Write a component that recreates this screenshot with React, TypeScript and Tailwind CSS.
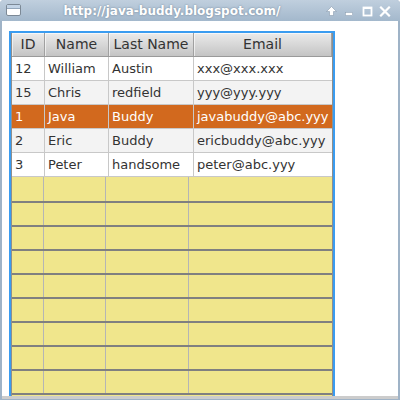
import React from "react";

const rows: string[][] = [
  ["12", "William", "Austin", "xxx@xxx.xxx"],
  ["15", "Chris", "redfield", "yyy@yyy.yyy"],
  ["1", "Java", "Buddy", "javabuddy@abc.yyy"],
  ["2", "Eric", "Buddy", "ericbuddy@abc.yyy"],
  ["3", "Peter", "handsome", "peter@abc.yyy"],
];

const colW = ["w-[33px]", "w-[64px]", "w-[85px]", "flex-1"];
const yelW = ["w-[32px]", "w-[62px]", "w-[83px]", "flex-1"];

function YellowRow({ top, h }: { top: boolean; h: string }) {
  return (
    <div className={`flex ${h} ${top ? "border-t-2 border-[#808080]" : ""}`}>
      {yelW.map((w, i) => (
        <div key={i} className={`${w} h-full ${i < 3 ? "border-r border-[#b5b5b5]" : ""}`} />
      ))}
    </div>
  );
}

export default function App() {
  const headers = ["ID", "Name", "Last Name", "Email"];
  return (
    <div className="w-[400px] h-[400px] flex flex-col bg-[#9fb3c7] rounded-t-[4px] pb-[1px] overflow-hidden font-['DejaVu_Sans',sans-serif]">
      {/* title bar */}
      <div className="h-[21px] flex items-center bg-gradient-to-b from-[#c0cfde] to-[#a3b8cc] shrink-0">
        <svg width="16" height="13" viewBox="0 0 16 13" className="ml-[6px] shrink-0">
          <rect x="0.5" y="0.5" width="14" height="11" rx="1.5" fill="#ffffff" stroke="#7c8996" />
          <rect x="1" y="1" width="13" height="3" fill="#c3d4e6" />
          <line x1="1" y1="4.5" x2="14" y2="4.5" stroke="#93a6ba" />
        </svg>
        <div className="flex-1 text-center text-white font-bold text-[12px] leading-[21px] pt-[1px] [text-shadow:0_0_2px_rgba(60,80,100,0.6)]">
          http://java-buddy.blogspot.com/
        </div>
        <div className="flex items-center pr-[6px]">
          <div className="w-[18px] h-[21px] flex items-center justify-center pt-[1px]">
            <svg width="11" height="10" viewBox="0 0 11 10">
              <path d="M5.5 0.5 L10.5 5.5 L7.5 5.5 L7.5 9.5 L3.5 9.5 L3.5 5.5 L0.5 5.5 Z" fill="#ffffff" stroke="#8a9cae" strokeWidth="0.6" />
            </svg>
          </div>
          <div className="w-[18px] h-[21px] flex items-center justify-center pt-[1px]">
            <svg width="8" height="10" viewBox="0 0 8 10">
              <rect x="0.5" y="6.5" width="7" height="3" fill="#ffffff" stroke="#8a9cae" strokeWidth="0.5" />
            </svg>
          </div>
          <div className="w-[18px] h-[21px] flex items-center justify-center pt-[1px]">
            <svg width="11" height="11" viewBox="0 0 11 11">
              <rect x="1.5" y="1.5" width="8" height="8" fill="none" stroke="#ffffff" strokeWidth="1.8" />
              <rect x="1" y="1" width="9" height="2" fill="#ffffff" />
            </svg>
          </div>
          <div className="w-[18px] h-[21px] flex items-center justify-center pt-[1px]">
            <svg width="12" height="11" viewBox="0 0 12 11">
              <path d="M2 1.5 L10 9.5 M10 1.5 L2 9.5" stroke="#ffffff" strokeWidth="2.2" strokeLinecap="square" />
            </svg>
          </div>
        </div>
      </div>

      {/* client area */}
      <div className="flex-1 mx-[2px] flex flex-col bg-white min-h-0">
        <div className="flex-1 min-h-0 pt-[10px] pl-[7px] overflow-hidden">
          <div className="w-[326px] h-full border-2 border-b-0 border-[#3a9cf0] flex flex-col">
            <div className="flex-1 border-x border-[#8e8e8e] flex flex-col bg-[#f0e68c] min-h-0">
              {/* header */}
              <div className="flex h-[24px] border-b border-[#9a9a9a] bg-gradient-to-b from-[#ebebeb] to-[#c4c4c4] shrink-0">
                {headers.map((h, i) => (
                  <div
                    key={h}
                    className={`${colW[i]} h-full flex items-center justify-center text-[14px] text-[#333333] border-r border-[#a0a0a0] shadow-[inset_1px_1px_0_rgba(255,255,255,0.6)]`}
                  >
                    {h}
                  </div>
                ))}
              </div>
              {/* rows */}
              {rows.map((r, ri) => {
                const sel = ri === 2;
                const bg = sel ? "bg-[#d2691e]" : ri % 2 === 1 ? "bg-[#f3f3f3]" : "bg-white";
                return (
                  <div key={ri} className={`flex h-[24px] border-b border-[#c8c8c8] shrink-0 ${bg}`}>
                    {r.map((c, ci) => (
                      <div
                        key={ci}
                        className={`${colW[ci]} h-full flex items-center pl-[3px] text-[13px] whitespace-nowrap overflow-hidden ${
                          sel ? "text-white" : "text-[#333333]"
                        } ${ci < 3 ? "border-r border-[#c8c8c8]" : ""}`}
                      >
                        {c}
                      </div>
                    ))}
                  </div>
                );
              })}
              {/* yellow placeholder grid */}
              <YellowRow top={false} h="h-[24px]" />
              {[0, 1, 2, 3, 4, 5, 6, 7].map((i) => (
                <YellowRow key={i} top={true} h="h-[24px]" />
              ))}
              <div className="border-t-2 border-[#808080]" />
            </div>
          </div>
        </div>
        <div className="h-[3px] bg-[#cccccc] shrink-0" />
      </div>
    </div>
  );
}
